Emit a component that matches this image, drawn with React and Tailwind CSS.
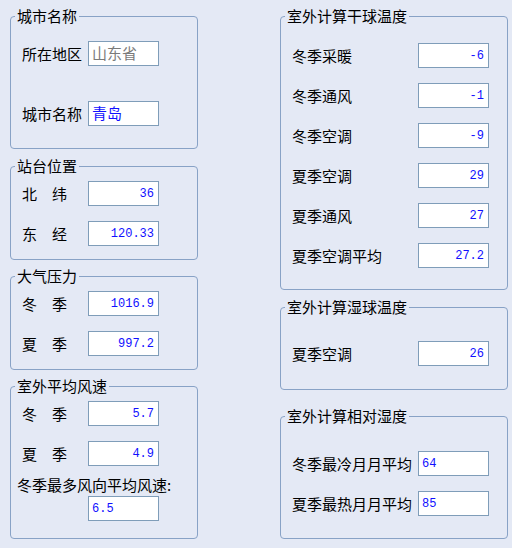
import React from "react";

const CJK = { fontFamily: '"Noto Sans CJK SC", "Noto Sans", sans-serif' };

function Group({ title, className, children }) {
  return (
    <fieldset
      className={`m-0 p-0 border border-[#88a2c6] rounded-[4px] min-w-0 ${className}`}
    >
      <legend className="ml-[4px] px-[2px] leading-[16px] text-[15px] text-black">
        {title}
      </legend>
      {children}
    </fieldset>
  );
}

function Box({ value, align = "right", tone = "blue", mono = true }) {
  const color = tone === "gray" ? "text-[#7a7a7a]" : "text-[#1010ff]";
  const just = align === "right" ? "justify-end pr-[4px]" : "justify-start pl-[3px]";
  const font = mono
    ? "font-['Liberation_Mono',monospace] text-[12px]"
    : "text-[15px]";
  return (
    <div
      className={`flex items-center h-[25px] w-[71px] shrink-0 bg-white border border-[#7f9db9] ${just} ${color} ${font}`}
    >
      {value}
    </div>
  );
}

function Row({ label, labelW, value, align, tone, mono, className = "" }) {
  return (
    <div className={`flex items-center h-[25px] ${className}`}>
      <div className={`${labelW} shrink-0 pl-[11px] text-[15px] leading-[18px] whitespace-nowrap`}>
        {label}
      </div>
      <Box value={value} align={align} tone={tone} mono={mono} />
    </div>
  );
}

export default function App() {
  const L = "w-[77px]";
  const R = "w-[137px]";
  return (
    <div
      className="w-[512px] h-[548px] bg-[#e4e9f5] flex text-black overflow-hidden"
      style={CJK}
    >
      <div className="w-[188px] ml-[10px] mt-[8px] flex flex-col">
        <Group title="城市名称" className="h-[141px] w-[188px]">
          <div className="pt-[17px] flex flex-col gap-[35px]">
            <Row label="所在地区" labelW={L} value="山东省" align="left" tone="gray" mono={false} />
            <Row label="城市名称" labelW={L} value="青岛" align="left" mono={false} />
          </div>
        </Group>
        <Group title="站台位置" className="h-[102px] w-[188px] mt-[9px]">
          <div className="pt-[7px] flex flex-col gap-[15px]">
            <Row label="北　纬" labelW={L} value="36" />
            <Row label="东　经" labelW={L} value="120.33" />
          </div>
        </Group>
        <Group title="大气压力" className="h-[102px] w-[188px] mt-[8px]">
          <div className="pt-[7px] flex flex-col gap-[15px]">
            <Row label="冬　季" labelW={L} value="1016.9" />
            <Row label="夏　季" labelW={L} value="997.2" />
          </div>
        </Group>
        <Group title="室外平均风速" className="h-[161px] w-[188px] mt-[8px]">
          <div className="pt-[7px] flex flex-col">
            <Row label="冬　季" labelW={L} value="5.7" />
            <Row label="夏　季" labelW={L} value="4.9" className="mt-[15px]" />
            <div className="mt-[10px] mb-[2px] pl-[6px] text-[15px] leading-[18px] whitespace-nowrap">
              冬季最多风向平均风速:
            </div>
            <div className="flex pl-[77px]">
              <Box value="6.5" align="left" />
            </div>
          </div>
        </Group>
      </div>

      <div className="w-[228px] ml-[82px] mt-[8px] flex flex-col">
        <Group title="室外计算干球温度" className="h-[282px] w-[228px]">
          <div className="pt-[19px] flex flex-col gap-[15px]">
            <Row label="冬季采暖" labelW={R} value="-6" />
            <Row label="冬季通风" labelW={R} value="-1" />
            <Row label="冬季空调" labelW={R} value="-9" />
            <Row label="夏季空调" labelW={R} value="29" />
            <Row label="夏季通风" labelW={R} value="27" />
            <Row label="夏季空调平均" labelW={R} value="27.2" />
          </div>
        </Group>
        <Group title="室外计算湿球温度" className="h-[91px] w-[228px] mt-[9px]">
          <div className="pt-[26px] flex flex-col">
            <Row label="夏季空调" labelW={R} value="26" />
          </div>
        </Group>
        <Group title="室外计算相对湿度" className="h-[131px] w-[228px] mt-[18px]">
          <div className="pt-[27px] flex flex-col gap-[15px]">
            <Row label="冬季最冷月月平均" labelW={R} value="64" align="left" />
            <Row label="夏季最热月月平均" labelW={R} value="85" align="left" />
          </div>
        </Group>
      </div>
    </div>
  );
}
